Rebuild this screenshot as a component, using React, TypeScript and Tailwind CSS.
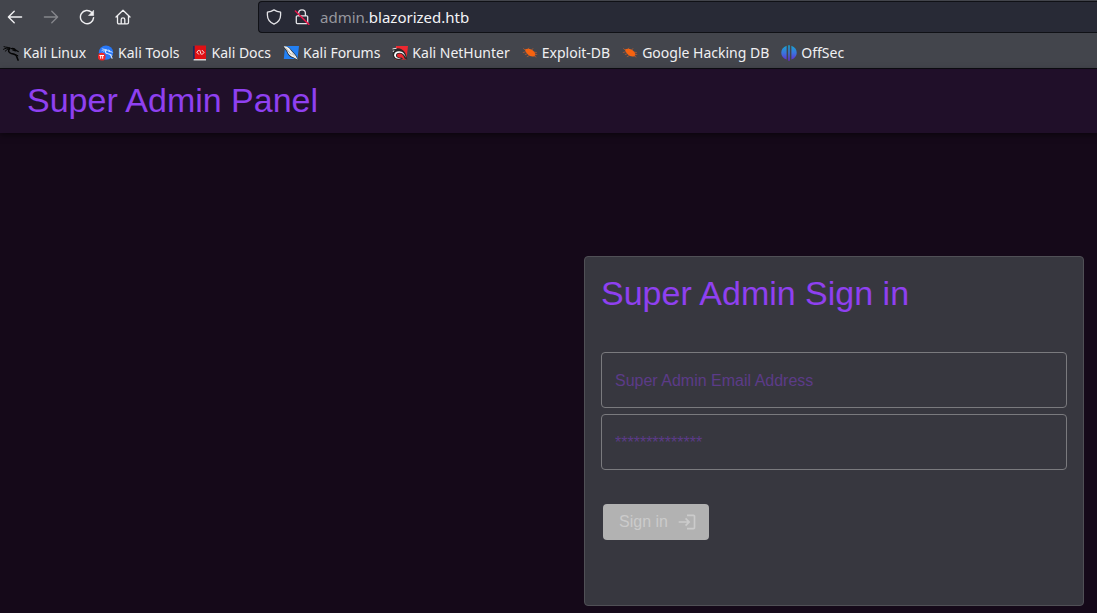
import type { ReactNode } from "react";

const stroke = {
  fill: "none",
  stroke: "currentColor",
  strokeLinecap: "round" as const,
  strokeLinejoin: "round" as const,
};

function BackIcon() {
  return (
    <svg viewBox="0 0 16 16" className="size-4" {...stroke} strokeWidth="1.4">
      <path d="M14.6 8H1.600M7.200 2.200 1.400 8l5.800 5.800" />
    </svg>
  );
}

function ForwardIcon() {
  return (
    <svg viewBox="0 0 16 16" className="size-4" {...stroke} strokeWidth="1.4">
      <path d="M1.400 8h13M8.800 2.200 14.600 8l-5.800 5.800" />
    </svg>
  );
}

function ReloadIcon() {
  return (
    <svg viewBox="0 0 16 16" className="size-4" {...stroke} strokeWidth="1.4">
      <path d="M12.600 3.300A6.600 6.600 0 1 0 14.600 8.600" />
      <path d="M14.600 1.600v4.900H9.800z" fill="currentColor" strokeWidth="0.6" />
    </svg>
  );
}

function HomeIcon() {
  return (
    <svg viewBox="0 0 16 16" className="size-4" {...stroke} strokeWidth="1.3">
      <path d="M1 8 8 1.200 15 8M2.500 6.800v6.700a1.300 1.300 0 0 0 1.300 1.300h8.400a1.300 1.300 0 0 0 1.300-1.300V6.800M6.200 14.600v-4a1.800 1.800 0 0 1 3.600 0v4" />
    </svg>
  );
}

function ShieldIcon() {
  return (
    <svg viewBox="0 0 16 16" className="size-4 text-[#e4e4e8]" {...stroke} strokeWidth="1.3">
      <path d="M8 .9c2 1.300 4.300 2 6.600 2.300v2.900c0 4.200-2.500 7.400-6.600 9.100-4.100-1.700-6.600-4.900-6.600-9.100V3.200C3.700 2.900 6 2.200 8 .9z" />
    </svg>
  );
}

function InsecureLockIcon() {
  return (
    <svg viewBox="0 0 16 16" className="size-4 text-[#e4e4e8]" {...stroke} strokeWidth="1.3">
      <path d="M4.600 6.800V4.200a3.400 3.400 0 0 1 6.800 0v2.600M3.300 6.800h9.400a1 1 0 0 1 1 1v5.800a1 1 0 0 1-1 1H3.300a1 1 0 0 1-1-1V7.800a1 1 0 0 1 1-1z" />
      <path d="m1.400 2 13.400 13.400" stroke="#e8174b" strokeWidth="1.500" />
    </svg>
  );
}

function DragonShape({ color }: { color: string }) {
  return (
    <g fill="none" stroke={color} strokeLinecap="round" strokeLinejoin="round">
      <path d="M1 1.700c2 .8 4 .4 6.300 1.300M.5 4.300C2.500 3 4.500 3 6.800 3.400M2.200 6.200C3.400 4.800 5 4 6.800 3.800" strokeWidth="1" />
      <path d="M6.500 3.800C4.700 6 6 8 8.300 8.400c2.700.4 4.700 1 5.300 3l1.500 3.700" strokeWidth="1.500" />
      <path d="M8.500 3.600c1.800-.6 3.300.2 4.500 1.700l2.200 1.200M9.800 4.800l2.800 1" strokeWidth="1.300" />
      <path d="m12 9.400 2.900 1.300" strokeWidth="1" />
    </g>
  );
}

function KaliLinuxIcon() {
  return (
    <svg viewBox="0 0 16 16" className="size-4">
      <DragonShape color="#050505" />
    </svg>
  );
}

function KaliToolsIcon() {
  return (
    <svg viewBox="0 0 16 16" className="size-4">
      <circle cx="8" cy="7.600" r="7.200" fill="#2777f7" />
      <g transform="translate(3.500 2.700) scale(.7)">
        <DragonShape color="#dcecff" />
      </g>
      <circle cx="3.700" cy="11.700" r="3.900" fill="#ee2628" />
      <path d="M1.400 10.500h4.600M2.700 10.500v3.200M4.700 10.500v3.200" stroke="#fff" strokeWidth="1" />
    </svg>
  );
}

function KaliDocsIcon() {
  return (
    <svg viewBox="0 0 16 16" className="size-4">
      <path d="M1 1h2v14H1z" fill="#172d60" />
      <path d="M2.700.5H14v13.700H2.700z" fill="#df1014" />
      <path d="M1.600 14H14v1.500H1.600z" fill="#d4d4d4" />
      <path d="M6.600 5.200 4.800 7.200l1.800 2M10.200 5.400l1.800 2-1.800 2M7.800 5.400l1.300 3.700" {...stroke} stroke="#fff" strokeWidth=".9" />
    </svg>
  );
}

function KaliForumsIcon() {
  return (
    <svg viewBox="0 0 16 16" className="size-4">
      <path d="M2 1h14l-1.500 13H.8L1.500 7z" fill="#2380f4" />
      <path d="M0 1.400C2 .9 6 1.400 8.400 5l4.700 5.300 2.400 5.300-5.200-2.500C6.700 12 5 10 3.700 6.700z" fill="#252525" />
      <path d="M.5 1.300C4 1 6.500 3 8 5.500l4.300 4.800 2.600 4.500-4.600-2.500C7 11 5 8.500 4.200 5.900z" fill="#f3f3f1" />
      <path d="m2.500 2.800 5.800 6.800M8.700 8.300l2.800 2.500" stroke="#777" strokeWidth=".6" />
    </svg>
  );
}

function NetHunterIcon() {
  return (
    <svg viewBox="0 0 16 16" className="size-4">
      <path d="M4 1h12l-1.500 13.500H3z" fill="#ed2830" />
      <path d="M.2 3.500 6 3.300c5.300.3 8.300 4.500 9.300 11.500l-2.800-1.400c-1-3.300-2.700-4.800-5-4.900-1.700 0-2.500.8-2.500 2 .2 1.700 2 2.500 4.500 2l1.500 1.300C7 16.200 2.200 14.600 1 11.200.3 9 .8 6.800 2.300 5.300z" fill="#292929" />
      <path d="M2 10.200C2.300 7.600 4.400 6 7.300 6.200c3.500.3 5.400 2.400 6.600 6.600-1.600-3.200-3.600-5-6.500-5-2.300 0-3.700 1.200-3.400 3.100.4 1.600 2.500 2.500 5 2.100-2.600 1.700-6.300.5-7-2.800z" fill="#fff" />
      <path d="m.5 3.900 4-.6M1 7l1-1.600" stroke="#e8e8e8" />
    </svg>
  );
}

function ExploitBugIcon() {
  return (
    <svg viewBox="0 0 16 16" className="size-4">
      <path d="M3 4.600C6 2.700 11 4.600 12.700 7.400c1 1.700.9 2.900-.1 3.600C8.900 13.100 3.700 9 3 4.600z" fill="#f66310" />
      <path d="m3.700 5.400-2.500-2M3.800 6.800.8 7.600M5.400 8.800l-2.500.7M7.300 10.600l-2.500 1.200M6 4.600l1-1.900M9.700 5l1.400-1.700M12 7.100l2.800.5M12.800 9.200l2.400.3M11.800 10.700l2.600 1.500" stroke="#cf602c" strokeWidth=".65" />
    </svg>
  );
}

function OffSecIcon() {
  return (
    <svg viewBox="0 0 16 16" className="size-4">
      <defs>
        <linearGradient id="offsec-fill" gradientUnits="userSpaceOnUse" x1="0" x2="0" y1="0" y2="16">
          <stop stopColor="#15a7ce" />
          <stop offset=".5" stopColor="#3b74df" />
          <stop offset="1" stopColor="#6428cf" />
        </linearGradient>
      </defs>
      <path d="M5.600.8v13.800C-1.500 12.300-1.500 3.100 5.600.8zM10.400.8c7.100 2.300 7.100 11.500 0 13.800zM7.200.3h1.600v15.400H7.200z" fill="url(#offsec-fill)" />
    </svg>
  );
}

function LoginIcon() {
  return (
    <svg viewBox="0 0 24 24" className="size-5" fill="currentColor" aria-hidden="true">
      <path d="M11 7 9.600 8.400l2.600 2.600H2v2h10.200l-2.600 2.600L11 17l5-5-5-5zm9 12h-8v2h8c1.100 0 2-.9 2-2V5c0-1.100-.9-2-2-2h-8v2h8v14z" />
    </svg>
  );
}

const bookmarks: { label: string; icon: ReactNode }[] = [
  { label: "Kali Linux", icon: <KaliLinuxIcon /> },
  { label: "Kali Tools", icon: <KaliToolsIcon /> },
  { label: "Kali Docs", icon: <KaliDocsIcon /> },
  { label: "Kali Forums", icon: <KaliForumsIcon /> },
  { label: "Kali NetHunter", icon: <NetHunterIcon /> },
  { label: "Exploit-DB", icon: <ExploitBugIcon /> },
  { label: "Google Hacking DB", icon: <ExploitBugIcon /> },
  { label: "OffSec", icon: <OffSecIcon /> },
];

function BrowserChrome() {
  return (
    <div className="border-b border-[#0d0c12] bg-[#43454c] font-['Noto_Sans',sans-serif] text-[#f0f0f2]">
      <div className="flex h-[34px] items-center pl-[7px]">
        <nav aria-label="Browser" className="flex w-[251px] shrink-0 items-center gap-5">
          <button type="button" aria-label="Back"><BackIcon /></button>
          <button type="button" aria-label="Forward" disabled className="text-[#85868b]"><ForwardIcon /></button>
          <button type="button" aria-label="Reload"><ReloadIcon /></button>
          <button type="button" aria-label="Home"><HomeIcon /></button>
        </nav>
        <div className="flex h-8 grow items-center gap-[10px] rounded-l border border-r-0 border-[#101116] bg-[#282a36] pl-[7px]">
          <span className="flex gap-3">
            <ShieldIcon />
            <InsecureLockIcon />
          </span>
          <a href="#" className="text-[15px] leading-5 text-[#f4f4f6]">
            <span className="text-[#96979e]">admin.</span>blazorized.htb
          </a>
        </div>
      </div>
      <nav aria-label="Bookmarks" className="flex h-[34px] items-center gap-3 pt-1 pl-[3px]">
        {bookmarks.map((item) => (
          <a key={item.label} href="#" className="flex items-center gap-1 text-sm whitespace-nowrap">
            {item.icon}
            {item.label}
          </a>
        ))}
      </nav>
    </div>
  );
}

const fieldClass =
  "block h-14 w-full rounded border border-[#7a7a7e] bg-transparent px-[13px] pt-[2px] text-base text-[#8f40f0] outline-none placeholder:text-[#5c3b88] placeholder:opacity-100";

export default function App() {
  return (
    <div className="flex min-h-screen flex-col bg-[#150919] font-['Liberation_Sans',Arial,sans-serif]">
      <BrowserChrome />
      <header className="flex h-16 items-center bg-[#200f29] px-[27px] pb-[2px] shadow-[0_2px_6px_rgba(0,0,0,0.5)]">
        <h1 className="text-[34px] leading-10 text-[#8f40f0]">Super Admin Panel</h1>
      </header>
      <main className="flex grow justify-end pt-[123px] pr-[13px] pb-[7px]">
        <form
          className="w-[500px] rounded border border-[#505056] bg-[#37373f] p-4"
          onSubmit={(event) => event.preventDefault()}
        >
          <h2 className="mb-[39px] text-[34px] leading-10 text-[#8f40f0]">Super Admin Sign in</h2>
          <div className="flex flex-col gap-[6px]">
            <input type="email" aria-label="Super Admin Email Address" placeholder="Super Admin Email Address" className={fieldClass} />
            <input type="password" aria-label="Password" placeholder="**************" className={fieldClass} />
          </div>
          <button
            type="submit"
            disabled
            className="mt-[34px] ml-[2px] flex h-9 items-center gap-[9px] rounded bg-[#b2b2b2] pr-3 pl-4 text-base text-[#cbcbcb]"
          >
            Sign in
            <LoginIcon />
          </button>
        </form>
      </main>
    </div>
  );
}
